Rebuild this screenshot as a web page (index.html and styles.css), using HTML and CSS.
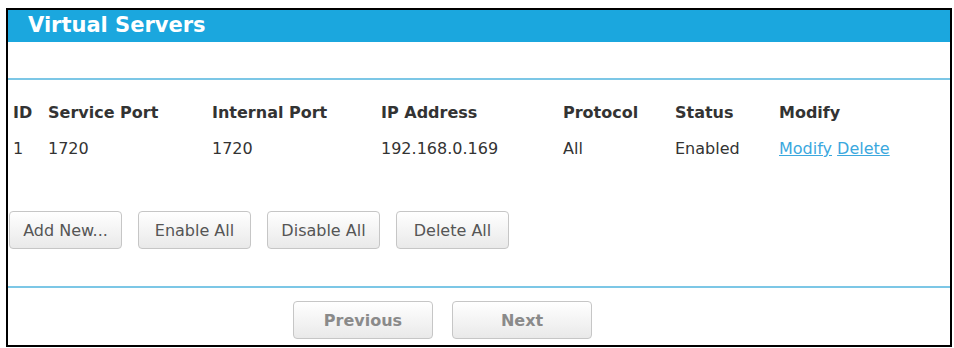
FILE: index.html
```html
<!DOCTYPE html>
<html>
<head>
<meta charset="utf-8">
<link rel="stylesheet" href="styles.css">
</head>
<body>
<div class="frame">
  <div class="title">Virtual Servers</div>
  <div class="spacer"></div>
  <div class="content">
    <div class="grid head">
      <div>ID</div><div>Service Port</div><div>Internal Port</div><div>IP Address</div><div>Protocol</div><div>Status</div><div>Modify</div>
    </div>
    <div class="grid row">
      <div>1</div><div>1720</div><div>1720</div><div>192.168.0.169</div><div>All</div><div>Enabled</div><div><a href="#">Modify</a> <a href="#">Delete</a></div>
    </div>
    <div class="actions">
      <button class="btn">Add New...</button>
      <button class="btn">Enable All</button>
      <button class="btn">Disable All</button>
      <button class="btn">Delete All</button>
    </div>
  </div>
  <div class="nav">
    <button class="btn nbtn">Previous</button>
    <button class="btn nbtn">Next</button>
  </div>
</div>
</body>
</html>
```
FILE: styles.css
```css
html, body { margin: 0; padding: 0; background: #fff; }
body { font-family: "DejaVu Sans", Verdana, sans-serif; color: #333; }
.frame {
  margin: 8px 0 0 6px;
  width: 942px;
  height: 335px;
  border: 2px solid #000;
  display: flex;
  flex-direction: column;
}
.title {
  background: #1ba7de;
  color: #fff;
  font-weight: bold;
  font-size: 21px;
  height: 32px;
  line-height: 30px;
  padding-left: 20px;
}
.spacer {
  height: 36px;
  border-bottom: 2px solid #7cc7e6;
}
.content {
  padding: 0 0 0 5px;
  box-sizing: border-box;
  height: 208px;
  border-bottom: 2px solid #7cc7e6;
}
.grid {
  display: grid;
  grid-template-columns: 35px 164px 169px 182px 112px 104px 1fr;
  font-size: 16px;
}
.head { font-weight: bold; margin-top: 23px; }
.row { margin-top: 17px; }
a { color: #3ba8de; }
.actions { display: flex; gap: 16px; margin-top: 53px; }
.btn {
  font-family: "DejaVu Sans", Verdana, sans-serif;
  font-size: 16px;
  color: #555;
  width: 113px;
  height: 38px;
  border: 1px solid #c6c6c6;
  border-radius: 4px;
  background: linear-gradient(#ffffff, #e9e9e9);
  padding: 0;
}
.actions .btn:first-child { margin-left: -4px; }
.nav { display: flex; gap: 19px; padding: 13px 0 0 285px; }
.nbtn { width: 140px; height: 38px; font-weight: bold; color: #8a8a8a; }
```
